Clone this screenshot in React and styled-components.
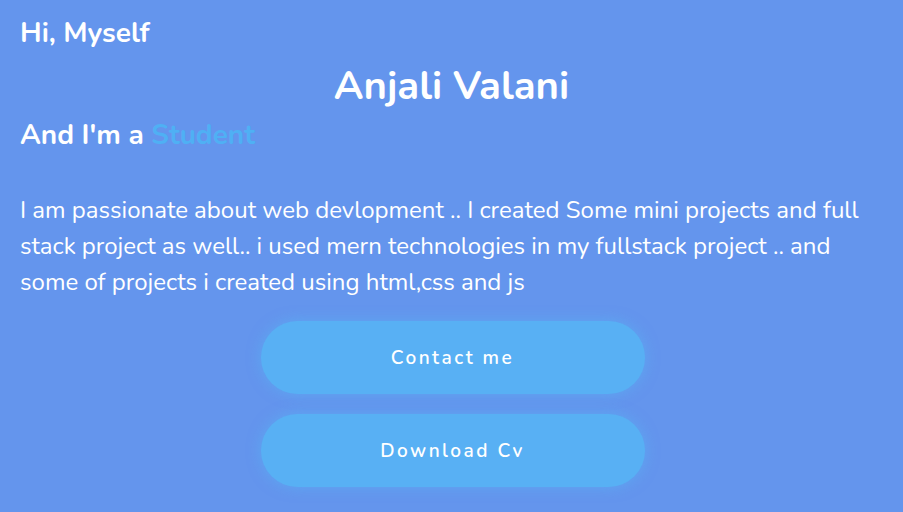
import React from "react";
import styled, { createGlobalStyle } from "styled-components";

const Global = createGlobalStyle`
  html, body { margin: 0; padding: 0; background: #6495ed; }
  body { font-family: "Nunito", "Lato", "Noto Sans", sans-serif; color: #fff; }
`;

const Page = styled.section`
  width: 903px;
  height: 512px;
  box-sizing: border-box;
  padding: 15px 20px 0 20px;
  display: flex;
  flex-direction: column;
  overflow: hidden;
`;

const Greeting = styled.h3`
  margin: 0;
  font-size: 28px;
  font-weight: 700;
  line-height: 36px;
`;

const Name = styled.h1`
  margin: 12px 0 0 0;
  font-size: 40px;
  font-weight: 700;
  line-height: 46px;
  text-align: center;
`;

const Role = styled.h3`
  margin: 8px 0 0 0;
  font-size: 28px;
  font-weight: 700;
  line-height: 36px;
`;

const Accent = styled.span`
  color: #4fb0f4;
`;

const Bio = styled.p`
  margin: 39px 0 0 0;
  font-size: 24px;
  line-height: 36px;
  max-width: 863px;
`;

const Actions = styled.div`
  margin-top: 21px;
  padding-left: 2px;
  display: flex;
  flex-direction: column;
  align-items: center;
  gap: 20px;
`;

const Button = styled.button`
  width: 384px;
  height: 73px;
  border: none;
  border-radius: 40px;
  background: #58b0f4;
  color: #fff;
  font-family: inherit;
  font-size: 19px;
  font-weight: 600;
  letter-spacing: 2.5px;
  box-shadow: 0 0 14px rgba(88, 176, 244, 0.7);
  cursor: pointer;
`;

export default function App() {
  return (
    <>
      <Global />
      <Page>
        <Greeting>Hi, Myself</Greeting>
        <Name>Anjali Valani</Name>
        <Role>
          And I'm a <Accent>Student</Accent>
        </Role>
        <Bio>
          I am passionate about web devlopment .. I created Some mini projects and full stack
          project as well.. i used mern technologies in my fullstack project .. and some of
          projects i created using html,css and js
        </Bio>
        <Actions>
          <Button>Contact me</Button>
          <Button>Download Cv</Button>
        </Actions>
      </Page>
    </>
  );
}
